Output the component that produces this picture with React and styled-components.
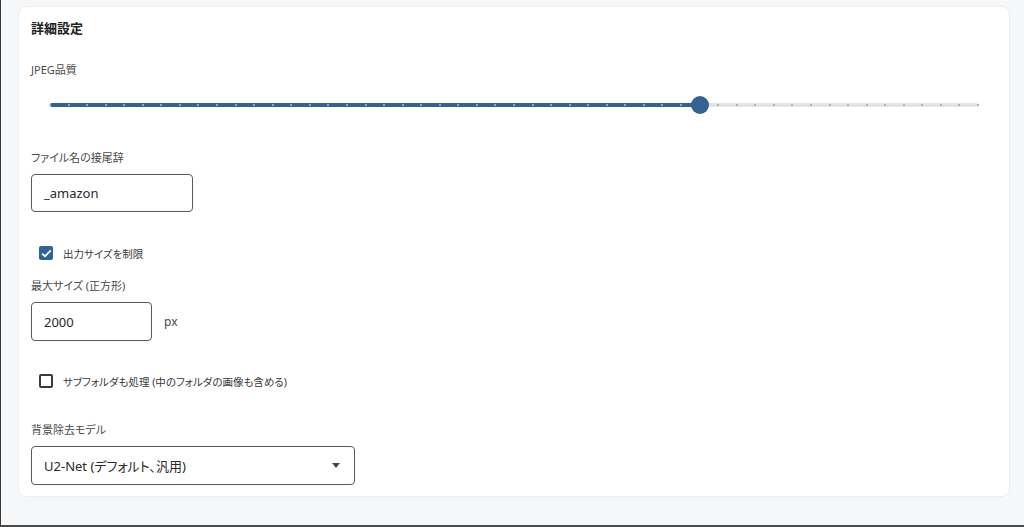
import React from "react"
import styled, { createGlobalStyle } from "styled-components"

const GlobalStyle = createGlobalStyle`
  html, body {
    margin: 0;
    padding: 0;
    background: #f6f7f9;
  }
  body {
    font-family: "Noto Sans", "Noto Sans CJK JP", sans-serif;
    font-feature-settings: "palt" 1;
    color: #2b2b2b;
  }
`

const Page = styled.div`
  box-sizing: border-box;
  width: 1024px;
  height: 527px;
  background: #f6f7f9;
  border-left: 1px solid #3a3a3a;
  border-bottom: 2px solid #4a4a4a;
  padding: 6px 0 0 17px;
  overflow: hidden;
`

const Card = styled.section`
  box-sizing: border-box;
  width: 992px;
  height: 491px;
  background: #fff;
  border: 1px solid #ebedf0;
  border-radius: 8px;
  padding: 11px 12px 0 12px;
  display: flex;
  flex-direction: column;
  align-items: flex-start;
`

const Title = styled.h2`
  margin: 0;
  font-size: 13px;
  font-weight: 700;
  line-height: 20px;
  color: #222;
`

const Label = styled.div`
  margin-top: ${p => p.$mt}px;
  font-size: 11px;
  line-height: 18px;
  color: #4a4a4a;
`

const SliderWrap = styled.div`
  position: relative;
  align-self: stretch;
  margin: 16px 19px 0;
  height: 20px;
`

const Track = styled.div`
  position: absolute;
  left: 0;
  right: 0;
  top: 8px;
  height: 4px;
  border-radius: 2px;
  background: #e1e3e7;
`

const Fill = styled.div`
  position: absolute;
  left: 0;
  top: 8px;
  height: 4px;
  border-radius: 2px;
  background: #35638f;
`

const Tick = styled.span`
  position: absolute;
  top: 9px;
  width: 2px;
  height: 2px;
  margin-left: -1px;
  border-radius: 50%;
  background: ${p => (p.$on ? "#a9bfd6" : "#9ca1a8")};
`

const Thumb = styled.span`
  position: absolute;
  top: 1px;
  width: 18px;
  height: 18px;
  margin-left: -9px;
  border-radius: 50%;
  background: #35638f;
`

const TextBox = styled.div`
  box-sizing: border-box;
  margin-top: 7px;
  width: ${p => p.$w}px;
  height: ${p => p.$h}px;
  border: 1px solid #5a5a5a;
  border-radius: 4px;
  padding: 0 12px;
  display: flex;
  align-items: center;
  justify-content: space-between;
  font-size: 13px;
  color: #2a2a2a;
`

const InputRow = styled.div`
  display: flex;
  align-items: center;
  gap: 12px;
`

const Unit = styled.span`
  margin-top: 7px;
  font-size: 12px;
  color: #4a4a4a;
`

const CheckRow = styled.label`
  margin-top: ${p => p.$mt}px;
  margin-left: 8px;
  height: 20px;
  display: flex;
  align-items: center;
  gap: 10px;
  font-size: 10.5px;
  color: #3a3a3a;
`

const Box = styled.span`
  box-sizing: border-box;
  width: 14px;
  height: 14px;
  border-radius: 2px;
  display: flex;
  align-items: center;
  justify-content: center;
  background: ${p => (p.$checked ? "#35638f" : "#fff")};
  border: ${p => (p.$checked ? "none" : "2px solid #3c3c3c")};
`

const Arrow = styled.span`
  width: 0;
  height: 0;
  border-left: 4.5px solid transparent;
  border-right: 4.5px solid transparent;
  border-top: 5px solid #444;
  margin-right: 2px;
`

function Checkbox({ checked, label, mt }) {
  return (
    <CheckRow $mt={mt}>
      <Box $checked={checked}>
        {checked && (
          <svg width="11" height="9" viewBox="0 0 11 9">
            <path d="M1.2 4.6 L4 7.3 L9.8 1.3" fill="none" stroke="#fff" strokeWidth="1.8" />
          </svg>
        )}
      </Box>
      {label}
    </CheckRow>
  )
}

function Slider({ value, min, max, step }) {
  const count = (max - min) / step
  const pct = ((value - min) / (max - min)) * 100
  const ticks = Array.from({ length: count + 1 }, (_, i) => (i / count) * 100)
  return (
    <SliderWrap>
      <Track />
      <Fill style={{ width: `${pct}%` }} />
      {ticks.map(t => (
        <Tick key={t} $on={t < pct} style={{ left: `${t}%` }} />
      ))}
      <Thumb style={{ left: `${pct}%` }} />
    </SliderWrap>
  )
}

export default function App() {
  return (
    <Page>
      <GlobalStyle />
      <Card>
        <Title>詳細設定</Title>
        <Label $mt={23}>JPEG品質</Label>
        <Slider value={85} min={50} max={100} step={1} />

        <Label $mt={34}>ファイル名の接尾辞</Label>
        <TextBox $w={162} $h={38}>_amazon</TextBox>

        <Checkbox checked mt={31} label="出力サイズを制限" />

        <Label $mt={14}>最大サイズ (正方形)</Label>
        <InputRow>
          <TextBox $w={121} $h={39}>2000</TextBox>
          <Unit>px</Unit>
        </InputRow>

        <Checkbox mt={30} label="サブフォルダも処理 (中のフォルダの画像も含める)" />

        <Label $mt={30}>背景除去モデル</Label>
        <TextBox $w={324} $h={39}>
          U2-Net (デフォルト、汎用)
          <Arrow />
        </TextBox>
      </Card>
    </Page>
  )
}
